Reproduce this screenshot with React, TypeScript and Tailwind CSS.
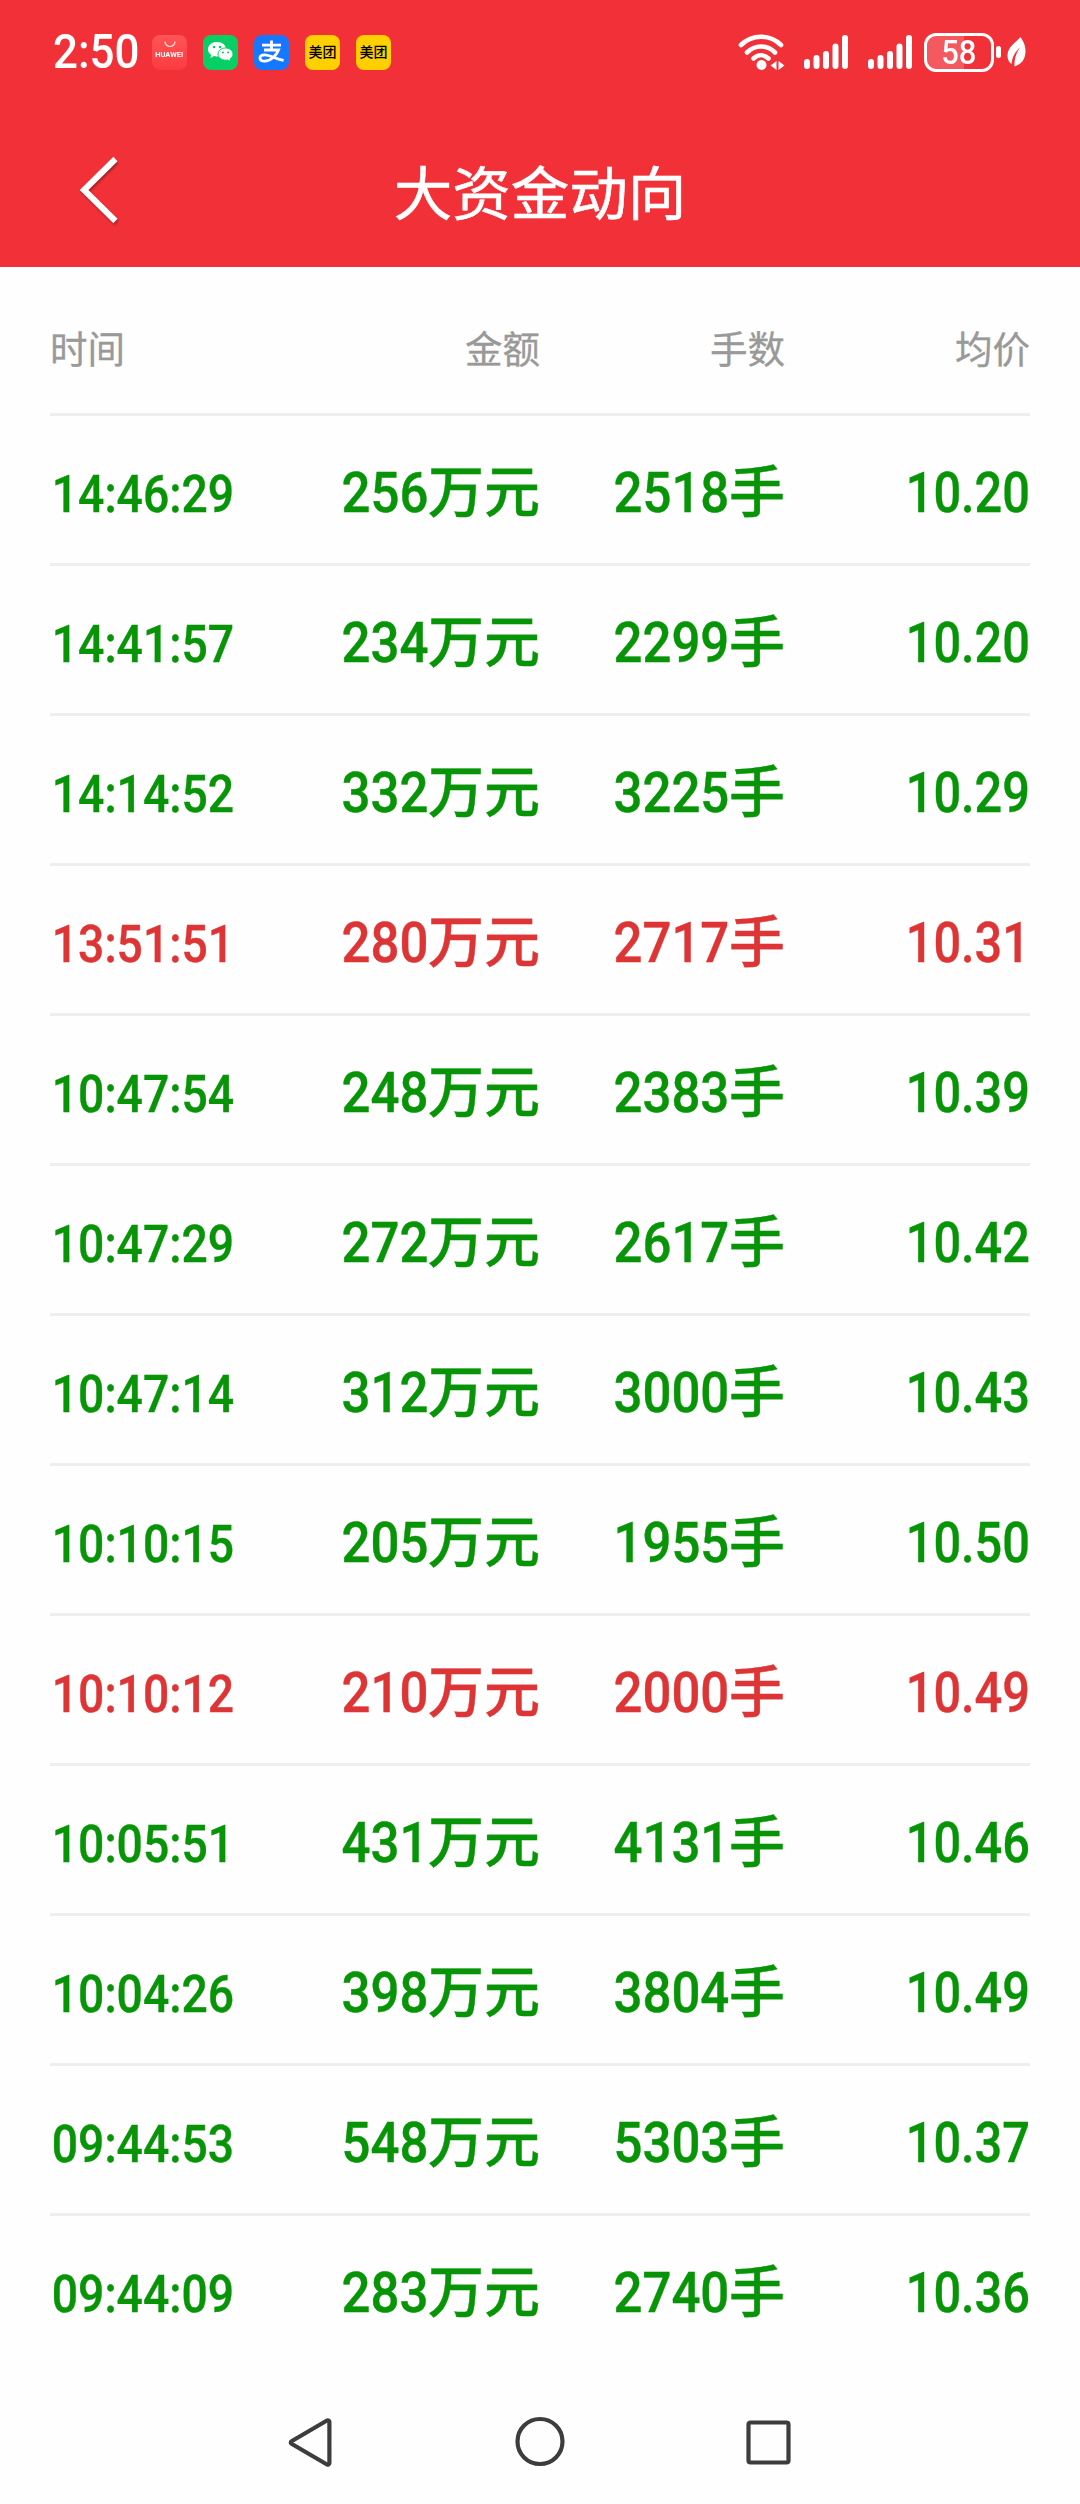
import clsx from "clsx";

interface Trade {
  time: string;
  amount: number;
  lots: number;
  price: string;
  up?: boolean;
}

const trades: Trade[] = [
  { time: "14:46:29", amount: 256, lots: 2518, price: "10.20" },
  { time: "14:41:57", amount: 234, lots: 2299, price: "10.20" },
  { time: "14:14:52", amount: 332, lots: 3225, price: "10.29" },
  { time: "13:51:51", amount: 280, lots: 2717, price: "10.31", up: true },
  { time: "10:47:54", amount: 248, lots: 2383, price: "10.39" },
  { time: "10:47:29", amount: 272, lots: 2617, price: "10.42" },
  { time: "10:47:14", amount: 312, lots: 3000, price: "10.43" },
  { time: "10:10:15", amount: 205, lots: 1955, price: "10.50" },
  { time: "10:10:12", amount: 210, lots: 2000, price: "10.49", up: true },
  { time: "10:05:51", amount: 431, lots: 4131, price: "10.46" },
  { time: "10:04:26", amount: 398, lots: 3804, price: "10.49" },
  { time: "09:44:53", amount: 548, lots: 5303, price: "10.37" },
  { time: "09:44:09", amount: 283, lots: 2740, price: "10.36" },
];

function Signal() {
  return (
    <svg width="46" height="36" viewBox="0 0 46 36" stroke="#fff" strokeWidth="6" strokeLinecap="round">
      <path d="M4 28v4M13.500 24v8M23 20v12M32.500 12.500v19.500M42 4v28" />
    </svg>
  );
}

function StatusBar() {
  return (
    <div className="flex h-[104px] items-center pl-[53px] pr-[54px]">
      <span className="w-[87px] origin-left scale-x-[0.915] whitespace-nowrap text-[48px] leading-none font-medium">2:50</span>
      <div className="ml-3 flex gap-4">
        <div className="flex size-[35px] flex-col items-center rounded-lg bg-linear-to-b from-[#ff5457] to-[#fb3b40] pt-[5px]">
          <svg width="12" height="9" viewBox="0 0 12 9" fill="none" stroke="#ffe3e3" strokeWidth="1.200">
            <path d="M1 1.500a5 5 0 0 0 10 0" />
          </svg>
          <span className="scale-x-[1.150] text-[6.500px] leading-[13px] font-bold">HUAWEI</span>
        </div>
        <svg width="35" height="35" viewBox="0 0 35 35">
          <rect width="35" height="35" rx="8" fill="#07cf64" />
          <path d="M14 7C8.500 7 5 10.300 5 14.200c0 2.400 1.200 4.300 3.200 5.700L7.400 23l3.500-1.900c1 .3 2 .4 3.100.4 5.300 0 9-3.300 9-7.300S19.500 7 14 7Z" fill="#fff" />
          <path d="M22.500 13c-4.300 0-7.500 2.700-7.500 6.100s3.200 6.100 7.500 6.100c.9 0 1.700-.1 2.400-.3l2.900 1.700-.7-2.700c1.900-1.200 2.900-2.800 2.900-4.800 0-3.400-3.200-6.100-7.500-6.100Z" fill="#fff" stroke="#07cf64" strokeWidth="1" />
          <g fill="#07cf64">
            <circle cx="11" cy="12" r="1.300" />
            <circle cx="17" cy="12" r="1.300" />
            <circle cx="20" cy="17.500" r="1" />
            <circle cx="25" cy="17.500" r="1" />
          </g>
        </svg>
        <svg width="35" height="35" viewBox="0 0 35 35" fill="none" stroke="#fff">
          <rect width="35" height="35" rx="8" fill="#1677ff" stroke="none" />
          <path d="M8 10.200h19M17.500 5.500v9.500M10 15h14.500c-1.800 5-8 11.200-13.700 11.200-3.200 0-4.800-1.300-4.800-3.100 0-1.900 1.900-3.200 4.600-3.200 5.400 0 11 4 19 5.500" strokeWidth="2.800" />
        </svg>
        {[0, 1].map((i) => (
          <div key={i} className="flex size-[35px] items-center justify-center rounded-lg bg-[#ffd000] text-[14px] leading-none font-medium whitespace-nowrap text-black">
            美团
          </div>
        ))}
      </div>
      <div className="ml-auto flex items-center">
        <svg width="47" height="37" viewBox="0 0 47 37" fill="none" stroke="#fff" strokeWidth="4.600" strokeLinecap="round">
          <path d="M3 11C14 0 32 0 43 11M9 18.500c8-8 20-8 28 0M15.500 24.500c4.500-4.300 10.500-4.300 15 0" />
          <circle cx="23.500" cy="31" r="5" fill="#fff" stroke="none" />
          <path d="m38.500 27-6 4.500 6 4.500zM40.500 27l6 4.500-6 4.500z" fill="#fff" stroke="none" />
        </svg>
        <div className="ml-[18px] flex gap-[18px]">
          <Signal />
          <Signal />
        </div>
        <div className="ml-[11px] flex h-[39px] w-[70px] items-center justify-center rounded-xl border-[3px] border-white bg-linear-to-r from-white/20 from-58% to-transparent to-58%">
          <span className="scale-x-[0.940] text-[33px] leading-none font-medium">58</span>
        </div>
        <div className="ml-[2px] h-[12px] w-[5px] rounded-full bg-white" />
        <svg className="ml-[6px]" width="19" height="31" viewBox="0 0 19 31" fill="#fff">
          <path d="M13.500 0C9 5.500 1 9 .5 18c-.2 4 1.200 7 4 9C5 20 8 15 13 10.500 9.500 15.500 7 21 7.500 29.500 15 27 18.500 22 18.500 14c0-6-2.500-10-5-14Z" />
        </svg>
      </div>
    </div>
  );
}

function TradeRow({ trade }: { trade: Trade }) {
  return (
    <div
      className={clsx(
        "grid h-[150px] grid-cols-4 items-center border-t-[3px] border-[#eee] pt-[6px] text-right text-[56px] leading-[80px] font-medium whitespace-nowrap [-webkit-text-stroke:0.4px_currentColor]",
        trade.up ? "text-[#dd3535]" : "text-[#079407]"
      )}
    >
      <span className="origin-left scale-x-[0.890] pt-[4px] pl-[2px] text-left text-[52px]">{trade.time}</span>
      <div>
        <span className="inline-block origin-right scale-x-[0.910]">{trade.amount}</span>
        万元
      </div>
      <div>
        <span className="inline-block origin-right scale-x-[0.910]">{trade.lots}</span>手
      </div>
      <span className="origin-right scale-x-[0.870]">{trade.price}</span>
    </div>
  );
}

export default function App() {
  return (
    <div className="flex h-[2504px] w-[1080px] flex-col bg-[#fefefe] font-['Roboto','Noto_Sans_CJK_SC',sans-serif]">
      <header className="h-[267px] bg-[#f23038] text-white">
        <StatusBar />
        <div className="grid h-[163px] grid-cols-[140px_1fr_140px] items-center">
          <svg className="mt-[8px] ml-[79px] drop-shadow-[1px_2px_1px_rgba(0,0,0,0.3)]" width="40" height="68" viewBox="0 0 40 68" fill="none" stroke="#fff" strokeWidth="6">
            <path d="M36.500 3 5 34l31.500 31" />
          </svg>
          <h1 className="pt-[18px] text-center text-[58.500px] leading-[80px] font-normal [-webkit-text-stroke:0.6px_white]">大资金动向</h1>
        </div>
      </header>

      <main className="px-[50px]">
        <div className="grid h-[146px] grid-cols-4 items-center pt-5 text-right text-[37.500px] text-[#999] [-webkit-text-stroke:0.3px_#999]">
          <span className="text-left">时间</span>
          <span>金额</span>
          <span>手数</span>
          <span>均价</span>
        </div>
        {trades.map((trade) => (
          <TradeRow key={trade.time} trade={trade} />
        ))}
      </main>

      <nav className="mt-auto h-[141px] pt-[50px]">
        <svg className="mx-auto" width="510" height="60" viewBox="0 0 510 60" fill="none" stroke="#3d3d3d" strokeWidth="4.200" strokeLinejoin="round">
          <path d="M6.500 28.200 42 7.500a1.600 1.600 0 0 1 2.400 1.400v41.200A1.600 1.600 0 0 1 42 51.500L6.500 30.800a1.500 1.500 0 0 1 0-2.600Z" />
          <circle cx="255" cy="28.500" r="22.500" />
          <rect x="463.500" y="9.500" width="40" height="40" rx="2" />
        </svg>
      </nav>
    </div>
  );
}
